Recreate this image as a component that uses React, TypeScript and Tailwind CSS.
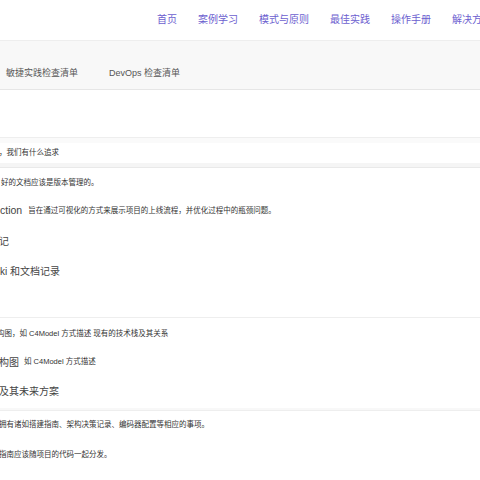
const font = { fontFamily: '"Liberation Sans", "Noto Sans CJK SC", sans-serif' }

const navItems = ['首页', '案例学习', '模式与原则', '最佳实践', '操作手册', '解决方案']

export default function App() {
  return (
    <div className="w-[480px] h-[480px] overflow-hidden bg-white text-[#333]" style={font}>
      {/* Top nav */}
      <div className="h-[41px] border-b border-[#eeeeee] flex items-center pl-[157px] gap-[21px] whitespace-nowrap">
        {navItems.map((item) => (
          <span key={item} className="text-[10px] leading-[12px] text-[#6c60cf]">
            {item}
          </span>
        ))}
      </div>

      {/* Sub nav */}
      <div className="h-[49px] bg-[#f8f8f8] border-b border-[#e6e6e6] flex items-start pt-[26px] pl-[6px] gap-[31px] whitespace-nowrap">
        <span className="text-[9px] leading-[12px] text-[#555]">敏捷实践检查清单</span>
        <span className="text-[9px] leading-[12px] text-[#555]">DevOps 检查清单</span>
      </div>

      <div className="h-[47px]" />

      {/* Quote-ish block */}
      <div className="border-t border-[#eeeeee] h-[6px] bg-[#fafafa]" />
      <div className="h-[20px] flex items-center whitespace-nowrap">
        <span className="text-[7.5px] -ml-[1px]">，我们有什么追求</span>
      </div>
      <div className="h-[5px] bg-[#f5f5f5] border-b border-[#e9e9e9]" />

      <div className="h-[30px] flex items-center whitespace-nowrap">
        <span className="text-[7.5px] ml-[1px]">好的文档应该是版本管理的。</span>
      </div>
      <div className="h-[26px] flex items-center whitespace-nowrap">
        <span className="text-[10.5px] text-[#444]">ction</span>
        <span className="text-[7.5px] ml-[6px]">旨在通过可视化的方式来展示项目的上线流程，并优化过程中的瓶颈问题。</span>
      </div>
      <div className="h-[34px] flex items-center whitespace-nowrap">
        <span className="text-[10px] text-[#444] -ml-[1px]">记</span>
      </div>
      <div className="h-[26px] flex items-center whitespace-nowrap">
        <span className="text-[10px] text-[#444]">ki 和文档记录</span>
      </div>

      <div className="h-[34px] border-b border-[#eeeeee]" />

      <div className="h-[32px] flex items-center whitespace-nowrap">
        <span className="text-[7.5px] -ml-[3px]">构图，如 C4Model 方式描述 现有的技术栈及其关系</span>
      </div>
      <div className="h-[24px] flex items-center whitespace-nowrap">
        <span className="text-[10px] text-[#444] -ml-[1px]">构图</span>
        <span className="text-[7.5px] ml-[5px]">如 C4Model 方式描述</span>
      </div>
      <div className="h-[34px] flex items-center whitespace-nowrap">
        <span className="text-[10px] text-[#444] -ml-[1px]">及其未来方案</span>
      </div>
      <div className="h-[3px] bg-[#f8f8f8] border-b border-[#eeeeee]" />

      <div className="h-[28px] flex items-center whitespace-nowrap">
        <span className="text-[7.5px] -ml-[1px]">拥有诸如搭建指南、架构决策记录、编码器配置等相应的事项。</span>
      </div>
      <div className="h-[32px] flex items-center whitespace-nowrap">
        <span className="text-[7.5px] -ml-[1px]">指南应该随项目的代码一起分发。</span>
      </div>
    </div>
  )
}
